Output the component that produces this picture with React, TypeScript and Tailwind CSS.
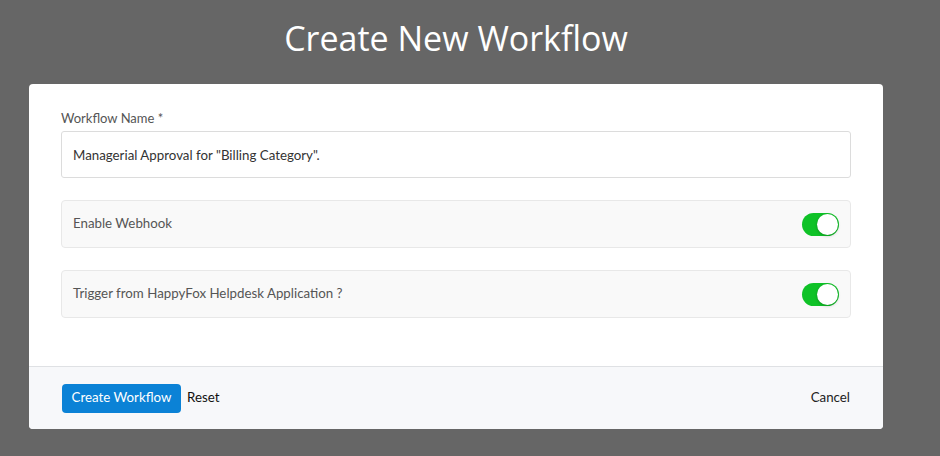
import React, { useState } from 'react';

const Toggle: React.FC<{ on: boolean; onChange: () => void }> = ({ on, onChange }) => (
  <button
    onClick={onChange}
    className={`relative w-[37px] h-[23px] rounded-full transition-colors ${on ? 'bg-[#0fc227]' : 'bg-gray-300'}`}
    aria-pressed={on}
  >
    <span
      className={`absolute top-[1px] w-[21px] h-[21px] rounded-full bg-white shadow-[0_1px_3px_rgba(0,0,0,0.25)] transition-all ${on ? 'left-[15px]' : 'left-[1px]'}`}
    />
  </button>
);

const ToggleRow: React.FC<{ label: string; on: boolean; onChange: () => void }> = ({ label, on, onChange }) => (
  <div className="flex items-center justify-between h-[48px] pl-[11px] pr-[11px] bg-[#f9f9f9] border border-[#e8e8e8] rounded-[4px]">
    <span className="text-[13.3px] text-[#555]">{label}</span>
    <Toggle on={on} onChange={onChange} />
  </div>
);

export default function App() {
  const [name, setName] = useState('Managerial Approval for "Billing Category".');
  const [webhook, setWebhook] = useState(true);
  const [trigger, setTrigger] = useState(true);

  return (
    <div className="w-[940px] h-[456px] bg-[#666666] pt-[16px] pl-[29px] font-['Lato',sans-serif] overflow-hidden">
      <h1 className="w-[854px] text-center text-white text-[34px] leading-[44px] font-medium h-[68px] font-['Open_Sans',sans-serif]">
        Create New Workflow
      </h1>

      {/* Card */}
      <div className="w-[854px] bg-white rounded-[4px] overflow-hidden">
        <div className="px-[32px] pt-[26px] pb-[48px]">
          <label className="block text-[13px] text-[#555] leading-[16px] mb-[5px]">Workflow Name *</label>
          <input
            value={name}
            onChange={(e) => setName(e.target.value)}
            className="w-full h-[47px] px-[11px] border border-[#dcdcdc] rounded-[3px] text-[13.3px] text-[#333] outline-none"
          />

          <div className="flex flex-col gap-[22px] mt-[22px]">
            <ToggleRow label="Enable Webhook" on={webhook} onChange={() => setWebhook(!webhook)} />
            <ToggleRow
              label="Trigger from HappyFox Helpdesk Application ?"
              on={trigger}
              onChange={() => setTrigger(!trigger)}
            />
          </div>
        </div>

        {/* Footer */}
        <div className="flex items-center justify-between h-[63px] px-[33px] bg-[#f7f8fa] border-t border-[#dfe1e4]">
          <div className="flex items-center gap-[6px]">
            <button className="h-[29px] w-[119px] rounded-[4px] bg-[#0b82d6] text-white text-[13.3px]">
              Create Workflow
            </button>
            <button className="text-[13.3px] text-[#111]">Reset</button>
          </div>
          <button className="text-[13.3px] text-[#222]">Cancel</button>
        </div>
      </div>
    </div>
  );
}
